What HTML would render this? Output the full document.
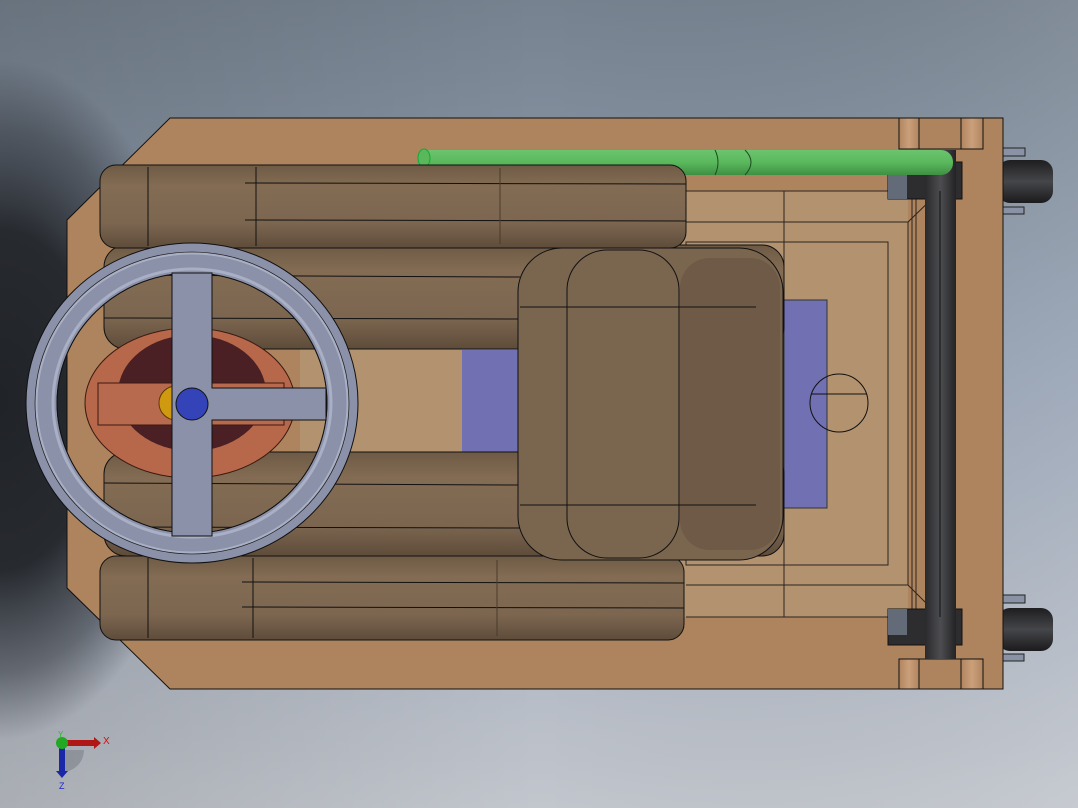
<!DOCTYPE html>
<html><head><meta charset="utf-8"><style>html,body{margin:0;padding:0;width:1078px;height:808px;overflow:hidden}svg{display:block}</style></head>
<body>
<svg width="1078" height="808" viewBox="0 0 1078 808" xmlns="http://www.w3.org/2000/svg">
<defs>
<linearGradient id="bg" x1="0" y1="0" x2="0" y2="1">
<stop offset="0" stop-color="#76828f"/><stop offset="0.45" stop-color="#96a2b4"/><stop offset="1" stop-color="#c2c6cd"/></linearGradient>
<linearGradient id="bgx" x1="0" y1="0" x2="1" y2="0">
<stop offset="0" stop-color="#000" stop-opacity="0.12"/><stop offset="0.5" stop-color="#000" stop-opacity="0"/><stop offset="1" stop-color="#fff" stop-opacity="0.08"/></linearGradient>
<radialGradient id="sh" gradientUnits="userSpaceOnUse" cx="0" cy="400" r="200" gradientTransform="translate(0,400) scale(1,1.7) translate(0,-400)">
<stop offset="0" stop-color="#202327"/><stop offset="0.5" stop-color="#272a2f"/><stop offset="0.8" stop-color="#3a3f47" stop-opacity="0.6"/><stop offset="1" stop-color="#3a3f47" stop-opacity="0"/></radialGradient>
<linearGradient id="cush" x1="0" y1="0" x2="0" y2="1">
<stop offset="0" stop-color="#6e5a45"/><stop offset="0.25" stop-color="#836c53"/><stop offset="0.7" stop-color="#7c6650"/><stop offset="1" stop-color="#5e4c3a"/></linearGradient>
<linearGradient id="axle" x1="0" y1="0" x2="1" y2="0">
<stop offset="0" stop-color="#2a2a2c"/><stop offset="0.5" stop-color="#4c4d50"/><stop offset="1" stop-color="#232325"/></linearGradient>
<linearGradient id="rod" x1="0" y1="0" x2="0" y2="1">
<stop offset="0" stop-color="#6cc46e"/><stop offset="0.5" stop-color="#5ab85c"/><stop offset="1" stop-color="#3f8f43"/></linearGradient>
<linearGradient id="wheel" x1="0" y1="0" x2="0" y2="1">
<stop offset="0" stop-color="#1e1e20"/><stop offset="0.5" stop-color="#454649"/><stop offset="1" stop-color="#1b1b1d"/></linearGradient>
<linearGradient id="post" x1="0" y1="0" x2="1" y2="0">
<stop offset="0" stop-color="#b0845e"/><stop offset="0.5" stop-color="#caa07a"/><stop offset="1" stop-color="#b0845e"/></linearGradient>
</defs>
<rect width="1078" height="808" fill="url(#bg)"/>
<rect width="1078" height="808" fill="url(#bgx)"/>
<rect width="1078" height="808" fill="url(#sh)"/>

<g stroke="#222" stroke-width="1">
<rect x="1002" y="148" width="23" height="8" fill="#8a93a6"/>
<rect x="1002" y="207" width="22" height="7" fill="#8a93a6"/>
<rect x="1002" y="595" width="23" height="8" fill="#8a93a6"/>
<rect x="1002" y="654" width="22" height="7" fill="#8a93a6"/>
</g>
<rect x="998" y="160" width="55" height="43" rx="12" fill="url(#wheel)"/>
<rect x="998" y="608" width="55" height="43" rx="12" fill="url(#wheel)"/>

<polygon points="170,118 1003,118 1003,689 170,689 67,588 67,220" fill="#ae845e" stroke="#111" stroke-width="1"/>
<rect x="300" y="191" width="608" height="426" fill="#b3926f"/>
<g fill="none" stroke="#2a2420" stroke-width="1">
<line x1="686" y1="191" x2="940" y2="191"/>
<line x1="686" y1="617" x2="940" y2="617"/>
<line x1="784" y1="191" x2="784" y2="617"/>
<rect x="686" y="242" width="202" height="323"/>
<line x1="686" y1="222" x2="908" y2="222"/>
<line x1="686" y1="585" x2="908" y2="585"/>
<line x1="908" y1="222" x2="908" y2="585"/>
<line x1="912" y1="191" x2="912" y2="617"/>
<line x1="916" y1="191" x2="916" y2="617"/>
<line x1="908" y1="222" x2="940" y2="191"/>
<line x1="908" y1="585" x2="940" y2="617"/>
</g>
<rect x="784" y="300" width="43" height="208" fill="#7170b2" stroke="#333" stroke-width="1"/>
<rect x="462" y="350" width="58" height="102" fill="#7170b2"/>
<g fill="none" stroke="#111" stroke-width="1">
<ellipse cx="839" cy="403" rx="29" ry="29"/>
<line x1="811" y1="394" x2="867" y2="394"/>
</g>

<g stroke="#111" stroke-width="1">
<rect x="899" y="118" width="84" height="31" fill="#ae845e"/>
<rect x="899" y="118" width="20" height="31" fill="url(#post)"/>
<rect x="961" y="118" width="22" height="31" fill="url(#post)"/>
<rect x="899" y="659" width="84" height="30" fill="#ae845e"/>
<rect x="899" y="659" width="20" height="30" fill="url(#post)"/>
<rect x="961" y="659" width="22" height="30" fill="url(#post)"/>
</g>
<rect x="888" y="162" width="74" height="37" fill="#2d2d2f" stroke="#111"/>
<rect x="888" y="175" width="19" height="24" fill="#636b78"/>
<rect x="888" y="609" width="74" height="36" fill="#2d2d2f" stroke="#111"/>
<rect x="888" y="609" width="19" height="26" fill="#636b78"/>
<rect x="925" y="150" width="31" height="509" fill="url(#axle)"/>
<line x1="940" y1="191" x2="940" y2="617" stroke="#111"/>

<rect x="418" y="150" width="535" height="25" rx="12" fill="url(#rod)"/>
<ellipse cx="424" cy="158" rx="6" ry="9" fill="#5ab85c" stroke="#1a3" stroke-width="1"/>
<g fill="none" stroke="#1d4a20" stroke-width="1">
<path d="M715 150 q6 12 0 25"/><path d="M745 150 q12 12 0 25"/>
</g>

<g stroke="#111" stroke-width="1">
<rect x="104" y="245" width="680" height="104" rx="22" fill="url(#cush)"/>
<rect x="104" y="452" width="680" height="104" rx="22" fill="url(#cush)"/>
<rect x="100" y="165" width="586" height="83" rx="16" fill="url(#cush)"/>
<rect x="100" y="556" width="584" height="84" rx="16" fill="url(#cush)"/>
</g>
<g fill="none" stroke="#111" stroke-width="1">
<line x1="148" y1="167" x2="148" y2="246"/><line x1="256" y1="167" x2="256" y2="246"/>
<line x1="245" y1="183" x2="686" y2="184"/><line x1="245" y1="220" x2="686" y2="221"/>
<line x1="148" y1="558" x2="148" y2="638"/><line x1="253" y1="558" x2="253" y2="638"/>
<line x1="242" y1="582" x2="684" y2="583"/><line x1="242" y1="607" x2="684" y2="608"/>
<line x1="104" y1="275" x2="520" y2="277"/><line x1="104" y1="318" x2="520" y2="319"/>
<line x1="104" y1="483" x2="520" y2="485"/><line x1="104" y1="527" x2="520" y2="528"/>
<path d="M500 168 v76 M497 560 v76" stroke="#4a3a2c"/>
</g>
<rect x="518" y="248" width="265" height="312" rx="44" fill="#7a654f" stroke="#111" stroke-width="1"/>
<rect x="680" y="258" width="100" height="292" rx="30" fill="#6e5a46"/>
<g fill="none" stroke="#111" stroke-width="1">
<rect x="567" y="250" width="112" height="308" rx="40"/>
<line x1="520" y1="307" x2="756" y2="307"/>
<line x1="520" y1="505" x2="756" y2="505"/>
</g>

<ellipse cx="190" cy="403" rx="105" ry="75" fill="#b8684a" stroke="#3a1a12"/>
<ellipse cx="192" cy="393" rx="74" ry="58" fill="#4a2024"/>
<rect x="98" y="383" width="186" height="42" fill="#b86a4e" stroke="#3a1a12"/>
<circle cx="176" cy="403" r="17" fill="#d09a10" stroke="#5a3a00"/>

<g>
<path fill-rule="evenodd" fill="#8b91a9" stroke="#111" stroke-width="1"
d="M26,403 a166,160 0 1,0 332,0 a166,160 0 1,0 -332,0 Z M57,403 a135,130 0 1,0 270,0 a135,130 0 1,0 -270,0 Z"/>
<ellipse cx="192" cy="403" rx="156" ry="150" fill="none" stroke="#a9afc4" stroke-width="3"/>
<ellipse cx="192" cy="403" rx="157" ry="151" fill="none" stroke="#222" stroke-width="0.8"/>
<ellipse cx="192" cy="403" rx="139" ry="134" fill="none" stroke="#a9afc4" stroke-width="3"/>
<ellipse cx="192" cy="403" rx="135" ry="130" fill="none" stroke="#111" stroke-width="0.8"/>
<path d="M172 273 H212 V388 H326 V420 H212 V536 H172 Z" fill="#8b91a9" stroke="#111" stroke-width="1"/>
<circle cx="192" cy="404" r="16" fill="#3444b8" stroke="#111"/>
</g>

<path d="M84 750 a22 22 0 0 1 -22 22 v-22 z" fill="#7d8088" opacity="0.6"/>
<rect x="62" y="740" width="32" height="6" fill="#b01818"/>
<polygon points="94,737 101,743 94,749" fill="#b01818"/>
<rect x="59" y="743" width="6" height="28" fill="#1a28a8"/>
<polygon points="56,771 68,771 62,778" fill="#1a28a8"/>
<circle cx="62" cy="743" r="6" fill="#22a822"/>
<text x="103" y="744" font-family="Liberation Sans, sans-serif" font-size="10" fill="#d01010">X</text>
<text x="59" y="789" font-family="Liberation Sans, sans-serif" font-size="9" fill="#1a28c8">Z</text>
<text x="58" y="737" font-family="Liberation Sans, sans-serif" font-size="8" fill="#22c022">Y</text>
</svg>
</body></html>
